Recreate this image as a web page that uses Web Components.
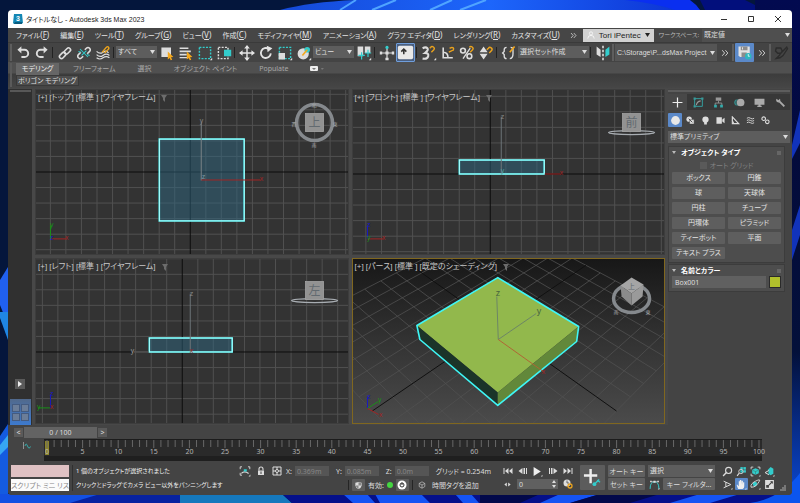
<!DOCTYPE html>
<html lang="ja">
<head>
<meta charset="utf-8">
<title>タイトルなし - Autodesk 3ds Max 2023</title>
<style>
  html, body { margin: 0; height: 100%; }
  body {
    font-family: "Noto Sans", "Noto Sans CJK JP", sans-serif;
    font-size: 7px;
    line-height: 1;
    color: #dcdcdc;
    background: #04123a;
    overflow: hidden;
  }
</style>
</head>
<body>
<max-desktop>
  <title-bar>タイトルなし - Autodesk 3ds Max 2023</title-bar>
  <menu-bar></menu-bar>
  <tool-bar></tool-bar>
  <ribbon-bar></ribbon-bar>
  <work-area>
    <view-port view="top">[+] [トップ] [標準 ] [ワイヤフレーム]</view-port>
    <view-port view="front">[+] [フロント] [標準 ] [ワイヤフレーム]</view-port>
    <view-port view="left">[+] [レフト] [標準 ] [ワイヤフレーム]</view-port>
    <view-port view="persp" active>[+] [パース] [標準 ] [既定のシェーディング]</view-port>
    <command-panel slot="panel"></command-panel>
  </work-area>
  <time-line></time-line>
  <status-bar></status-bar>
</max-desktop>

<script>
const BASE = `
  *, :host { box-sizing: border-box; }
  button, input, select { font: inherit; font-feature-settings: inherit; color: inherit; margin: 0; border: 0; padding: 0; border-radius: 0; min-width: 0; }
  button { background: none; white-space: nowrap; }
  :host { font-feature-settings: "palt"; white-space: nowrap; }
`

const CORNER = '<path d="M19 16v3h-3z" fill="#ddd"/>'

// every glyph is drawn in a 20 x 20 box
const ICONS = {
  undo: '<path d="M6 6h6a4 4 0 010 9H8" fill="none" stroke="#ddd" stroke-width="2.4"/><path d="M3 6l5-4.5v9z" fill="#ddd"/>',
  redo: '<path d="M14 6H8a4 4 0 000 9h4" fill="none" stroke="#ddd" stroke-width="2.4"/><path d="M17 6l-5-4.5v9z" fill="#ddd"/>',
  link: '<g fill="none" stroke="#ddd" stroke-width="2"><rect x="8.500" y="5" width="9" height="5" rx="2.500" transform="rotate(-45 13 7.500)"/><rect x="2.500" y="10.500" width="9" height="5" rx="2.500" transform="rotate(-45 7 13)"/></g>',
  unlink: '<g fill="none" stroke="#ddd" stroke-width="2"><path d="M11 6l2-2a2.600 2.600 0 014 4l-3 3M9 14l-2 2a2.600 2.600 0 01-4-4l3-3"/></g><path d="M5 5l10 10M13 7l-6 6M3 8l3 1M14 12l3 1" stroke="#3cc" stroke-width="1.300"/>',
  bind: '<g fill="none" stroke="#ddd" stroke-width="1.500"><path d="M2 8q4 4 8 1t7 1M2 12q4 4 8 1t8 0M2 16q4 3 8 0t8 0"/></g><path d="M9 9l5-6q2-2 3 0t-1 3l-4 4" fill="none" stroke="#e9a21d" stroke-width="1.800"/>',
  pick: '<path d="M3 3h12v12H3z" fill="#ddd"/><path d="M11 8l7 7-3 .3 1.500 3-1.800.8-1.400-3-2.300 2z" fill="#f5a81c"/>',
  pickName: '<path d="M2 3h11v2H2zM2 7h14v2H2zM2 11h9v2H2zM2 15h11v1.500H2z" fill="#ddd"/><path d="M11 8l7 7-3 .3 1.500 3-1.800.8-1.400-3-2.300 2z" fill="#f5a81c"/>',
  region: '<path d="M3 3h14v14H3z" fill="none" stroke="#3cc" stroke-width="1.800" stroke-dasharray="2.500 1.600"/>' + CORNER,
  crossing: '<path d="M3 3h12v14H3z" fill="none" stroke="#ddd" stroke-width="1.800" stroke-dasharray="2.500 1.600"/><path d="M10 6h9v8h-9z" fill="#3cc"/>',
  move: '<path d="M10 3v14M3 10h14" stroke="#e4e4e4" stroke-width="1.800"/><path d="M10 0l3.500 4.500h-7zM10 20l3.500-4.500h-7zM0 10l4.500-3.500v7zM20 10l-4.500-3.500v7z" fill="#e4e4e4"/>',
  rotate: '<path d="M13.500 5A6.200 6.200 0 1016 10.500" fill="none" stroke="#e4e4e4" stroke-width="2.300"/><path d="M11 1l7 3-6 5z" fill="#e4e4e4"/>',
  scale: '<path d="M3 3h14v14H3z" fill="none" stroke="#3cc" stroke-width="1.800" stroke-dasharray="2.500 1.600"/><path d="M2 10h8v8H2z" fill="#ddd"/>' + CORNER,
  place: '<circle cx="9" cy="11" r="7" fill="#ddd"/><circle cx="14" cy="6" r="3.500" fill="#3cc"/><path d="M8 13l6-7" stroke="#f5a81c" stroke-width="2"/>' + CORNER,
  pivot: '<path d="M2 2h7v12H2zM11 2h7v8h-7z" fill="#ddd"/><path d="M7 9v9M3 13h8M15 6v9M11 10h8" stroke="#3cc" stroke-width="1.500"/>' + CORNER,
  manip: '<path d="M10 3v14M3 10h14" stroke="#ddd" stroke-width="1.500"/><circle cx="10" cy="3" r="2" fill="#3cc"/><path d="M1 8v4h3V8zM16 8v4h3V8zM8 16h4v3H8zM8 8h4v4H8z" fill="#ddd"/>',
  keyboard: '<rect x="1" y="2" width="18" height="16" rx="2" fill="#e8e8e8"/><path d="M8 12V7M5 9l3-3 3 3" fill="none" stroke="#333" stroke-width="1.800"/>',
  angleSnap: '<path d="M4 3v13h12M4 9q6 0 6 7" fill="none" stroke="#ddd" stroke-width="2"/><path d="M11 9l4-2a2 2 0 000-4l-3 1" fill="none" stroke="#e9a21d" stroke-width="1.800"/>',
  snap: '<path d="M2 4q4-2 6 0t-3 6q5 0 4 4t-7 3" fill="none" stroke="#ddd" stroke-width="2.600"/><path d="M13 9l3-3a2 2 0 00-4-3l-1 1" fill="none" stroke="#e9a21d" stroke-width="1.800"/>' + CORNER,
  percent: '<circle cx="5" cy="7" r="3" fill="none" stroke="#ddd" stroke-width="2"/><circle cx="13" cy="14" r="3" fill="none" stroke="#ddd" stroke-width="2"/><path d="M5 17l9-13" stroke="#ddd" stroke-width="1.700"/><path d="M14 9l3-3a2 2 0 00-4-3" fill="none" stroke="#e9a21d" stroke-width="1.800"/>',
  spinner: '<path d="M7 2l5 7H2zM7 18l5-7H2z" fill="#ddd"/><path d="M14 10l3-3a2 2 0 00-4-3l-2 2" fill="none" stroke="#e9a21d" stroke-width="1.800"/>',
  braces: '<path d="M7 3q-3 0-3 3v2l-2 2 2 2v2q0 3 3 3M12 3q3 0 3 3v5q0 6-4 6" fill="none" stroke="#ddd" stroke-width="1.700"/><path d="M11 9l6-7" stroke="#f5a81c" stroke-width="2"/>',
  mirror: '<path d="M2 2l5 4v9l-5-3zM9 1h2v3H9zM9 6h2v3H9zM9 11h2v3H9zM9 16h2v3H9z" fill="#ddd"/><path d="M18 2l-5 4v9l5-3z" fill="#3cc"/>',
  save: '<path d="M2 2h15v14H4l-2-2z" fill="#e2e2e2"/><path d="M5 2h9v5H5zM6 10h7v6H6z" fill="#8c8c8c"/><path d="M7 3h1v3H7z" fill="#fff"/><circle cx="15" cy="15" r="4.300" fill="#2fb7bd"/><path d="M15 12v3h2" fill="none" stroke="#fff"/>',
  brush: '<path d="M3 4h6l2 4-2 3H5L2 8zM9 11l8-8 1 2-6 9-4 3-5 1 4-4z" fill="none" stroke="#2c2c2c" stroke-width="1.800"/>',
  more: '<path d="M3 3l6 7-6 7M11 3l6 7-6 7" fill="none" stroke="#ddd" stroke-width="2.200"/>',
  person: '<circle cx="10" cy="6" r="4" fill="none" stroke="#fff" stroke-width="1.800"/><path d="M2 19q0-8 8-8t8 8" fill="none" stroke="#fff" stroke-width="1.800"/>',
  plus: '<path d="M10 1v18M1 10h18" stroke="#eee" stroke-width="2.200"/>',
  modify: '<path d="M3 3h14v14H3z" fill="none" stroke="#3aa" stroke-width="1.600"/><path d="M6 15q1-7 8-8" fill="none" stroke="#999" stroke-width="2"/><path d="M1 1h4v4H1zM15 1h4v4h-4zM1 15h4v4H1z" fill="#3a9a9a"/>',
  hierarchy: '<path d="M5 1h10v6H5z" fill="#999"/><path d="M10 7v4M4 15v-4h12v4" fill="none" stroke="#999" stroke-width="1.500"/><path d="M2 14h5v5H2zM13 14h5v5h-5z" fill="#3aa"/>',
  motion: '<circle cx="12" cy="10" r="7" fill="#aaa"/><path d="M6 4a8 8 0 000 12M3 5a8 8 0 000 10" fill="none" stroke="#3aa" stroke-width="1.400"/>',
  display: '<path d="M1 3h18v11H1zM8 14h4v3H8zM6 16h8v2H6z" fill="#aaa"/>',
  wrench: '<path d="M8 8l9 9" stroke="#aaa" stroke-width="3.500"/><path d="M3 3l3 3 3-3q2 5-2 7-5 0-5-5z" fill="#aaa"/>',
  sphere: '<circle cx="10" cy="10" r="8" fill="#e8e8e8"/>',
  shapes: '<circle cx="7" cy="7" r="6" fill="#ddd"/><path d="M8 8h10v10H8z" fill="#ddd" stroke="#444"/><path d="M6 6l8 8" stroke="#444" stroke-width="2"/>',
  light: '<circle cx="10" cy="8" r="7" fill="#ddd"/><path d="M7 12h6v7H7z" fill="#ddd"/>',
  camera: '<path d="M1 3h12v14H1zM14 8l5-4v12l-5-4z" fill="#ddd"/>',
  helper: '<path d="M3 2l14 15H3z" fill="none" stroke="#ddd" stroke-width="2.600"/><path d="M3 10l4 7" stroke="#ddd" stroke-width="2"/>',
  waves: '<path d="M2 5q4-3 8 0t8 0M2 10q4-3 8 0t8 0M2 15q4-3 8 0t8 0" fill="none" stroke="#ddd" stroke-width="2"/>',
  system: '<circle cx="6" cy="6" r="4" fill="none" stroke="#ddd" stroke-width="2.400"/><circle cx="14" cy="13" r="4" fill="none" stroke="#ddd" stroke-width="2.400"/>',
  isolate: '<path d="M2 7V3h3M15 3h3v4M2 13v4h3" fill="none" stroke="#ddd" stroke-width="1.500"/><path d="M4 14q5-5 12 0" fill="none" stroke="#ddd" stroke-width="2"/><path d="M8 7h5v4H8z" fill="#3cc"/>' + CORNER,
  lock: '<path d="M4 9h12v9H4z" fill="#ddd"/><path d="M6 9V6a4 4 0 018 0v3" fill="none" stroke="#ddd" stroke-width="2.200"/><path d="M10 11v5" stroke="#444" stroke-width="2"/>',
  absolute: '<path d="M2 2h16v16H2z" fill="none" stroke="#ddd" stroke-width="2"/><circle cx="10" cy="10" r="3" fill="none" stroke="#ddd" stroke-width="2"/><path d="M10 2v5M10 13v5M2 10h5M13 10h5" stroke="#ddd" stroke-width="2"/>',
  shield: '<path d="M3 4l7-2 7 2v6q-1 6-7 8-6-2-7-8z" fill="#ddd"/><path d="M10 3v7H4q0 4 6 8v-8h6V4z" fill="#888"/>',
  toggle: '<circle cx="10" cy="10" r="9" fill="#fff"/><circle cx="10" cy="10" r="4" fill="none" stroke="#333" stroke-width="2"/><path d="M10 5v5" stroke="#333" stroke-width="2"/>',
  tag: '<path d="M10 2l7 4v8l-7 4-7-4V6zM3 6l7 4 7-4M10 10v8" fill="none" stroke="#ccc" stroke-width="1.600"/>',
  first: '<path d="M1 4h2v12H1zM11 4v12l-7-6zM19 4v12l-7-6z" fill="#ddd"/>',
  prev: '<path d="M9 4v12l-8-6zM11 4h3v12h-3zM16 4h2v12h-2z" fill="#ddd"/>',
  play: '<path d="M3 2l13 8-13 8z" fill="#eee"/>' + CORNER,
  next: '<path d="M11 4v12l8-6zM2 4h2v12H2zM6 4h3v12H6z" fill="#ddd"/>',
  last: '<path d="M17 4h2v12h-2zM1 4v12l7-6zM9 4v12l7-6z" fill="#ddd"/>',
  keyMode: '<path d="M8 4v12l-7-6zM12 4v12l7-6z" fill="#ddd"/>',
  timeConfig: '<circle cx="8" cy="8" r="7" fill="#ddd"/><path d="M8 3v5h4" fill="none" stroke="#444" stroke-width="1.500"/><circle cx="14" cy="14" r="4" fill="none" stroke="#e9a21d" stroke-width="2.600"/>',
  bigKey: '<path d="M8 1v15M1 8h14" stroke="#eee" stroke-width="2.600"/><path d="M12 17l5-5" stroke="#3cc" stroke-width="1.500"/><circle cx="12" cy="17" r="2" fill="#3cc"/><path d="M15 13l3 2" stroke="#3cc" stroke-width="1.300"/>',
  tangent: '<path d="M2 18q0-13 8-13t8 13" fill="none" stroke="#3cc" stroke-width="1.800"/><path d="M4 5h12" stroke="#ddd"/><path d="M8 3h4v4H8zM2 3h3v3H2zM15 3h3v3h-3z" fill="#ddd"/>' + CORNER,
  zoom: '<circle cx="12" cy="8" r="5.500" fill="none" stroke="#ddd" stroke-width="2"/><path d="M8 12l-6 6" stroke="#ddd" stroke-width="2.500"/>',
  zoomAll: '<path d="M8 2h10v10H8z" fill="#3cc"/><path d="M13 2v10M8 7h10" stroke="#444"/><circle cx="9" cy="10" r="4" fill="none" stroke="#ddd" stroke-width="1.500"/><path d="M6 13l-4 5" stroke="#ddd" stroke-width="2"/>',
  extents: '<path d="M2 6V2h4M14 2h4v4M2 14v4h4" fill="none" stroke="#ddd" stroke-width="1.600"/><path d="M10 4l6 3v6l-6 3-6-3V7z" fill="#3cc"/><path d="M5 8l5 2 5-2M10 10v5" fill="none" stroke="#376"/>' + CORNER,
  extentsAll: '<path d="M12 2l5 3v9l-5 3-4-3V6z" fill="#3cc"/><path d="M9 8l-7 4 7 4" fill="none" stroke="#ddd" stroke-width="1.800"/>' + CORNER,
  fov: '<path d="M3 4l13 6-13 6M7 6v8" fill="none" stroke="#ddd" stroke-width="1.800"/>' + CORNER,
  hand: '<path d="M4 18q-4-8-2-8l3 3V4h2v6-8h2.500v8l.5-7h2.500v8l.5-5h2v7q0 4-3 5z" fill="#eee"/>' + CORNER,
  orbit: '<circle cx="9" cy="9" r="4" fill="#3cc"/><path d="M2 15q-2-6 8-11t7 0-6 8-9 3" fill="none" stroke="#ddd" stroke-width="1.700"/>' + CORNER,
  maximize: '<path d="M2 2h16v16H2z" fill="#ddd"/><path d="M11 4h5v5zM4 11h5v5H4z" fill="#444"/><path d="M9 11l6-6" stroke="#444" stroke-width="2"/>',
  curve: '<path d="M3 2v14" stroke="#aaa" stroke-width="1.500"/><path d="M6 10q2-8 5 0t6 1" fill="none" stroke="#3cc" stroke-width="1.500"/>'
}

const icon = (name, size) => `<svg viewBox="0 0 20 20" width="${size}" height="${size}" aria-hidden="true">${ICONS[name]}</svg>`

const define = (tag, render) => {
  customElements.define(tag, class extends HTMLElement {
    constructor () {
      super()
      this.attachShadow({ mode: 'open' })
    }

    connectedCallback () {
      this.shadowRoot.innerHTML = `<style>${BASE}</style>` + render(this)
    }
  })
}

define('icon-button', el => `
  <style>
    :host { display: block; flex: none; width: 19px; height: 19px; }
    button { width: 100%; height: 100%; display: grid; place-items: center; border-radius: 1px; }
    :host([on]) button { background: #5b89c9; }
    :host([on][ring]) button { background: #4a5f80; border: 1px solid #6f9edc; }
    :host([flat]) button { background: #5c5c5c; }
    svg { display: block; }
  </style>
  <button type="button" aria-label="${el.getAttribute('label') || el.getAttribute('icon')}">${icon(el.getAttribute('icon'), el.getAttribute('size') || 14)}</button>
`)

define('drop-down', el => `
  <style>
    :host { display: grid; height: 12px; background: #5d5d5d; color: #ddd; align-items: center; }
    select, svg { grid-area: 1 / 1; }
    select { appearance: none; background: none; width: 100%; height: 100%; padding: 0 8px 0 2px; line-height: 10px; outline: none; }
    svg { justify-self: end; margin-right: 2px; pointer-events: none; }
  </style>
  <select aria-label="${el.getAttribute('label')}"><option>${el.getAttribute('value')}</option></select>
  <svg width="5" height="4" viewBox="0 0 5 4"><path d="M0 0h5L2.500 4z" fill="#ddd"/></svg>
`)

define('max-desktop', () => `
  <style>
    :host { display: grid; height: 100vh; }
    .wall, main { grid-area: 1 / 1; min-width: 0; min-height: 0; }
    .wall { width: 100%; height: 100vh; display: block; }
    main { margin: 10px 8px 8px; display: flex; flex-direction: column; background: #444; border-radius: 4px; overflow: hidden; position: relative; }
  </style>
  <svg class="wall" viewBox="0 0 800 503" preserveAspectRatio="none" aria-hidden="true">
    <defs>
      <linearGradient id="a"><stop offset="0" stop-color="#1449d8"/><stop offset=".5" stop-color="#1d66fb"/><stop offset="1" stop-color="#0b2fd0"/></linearGradient>
      <linearGradient id="b" x2="0" y2="1"><stop offset="0" stop-color="#020a50"/><stop offset=".3" stop-color="#030b3c"/><stop offset=".7" stop-color="#03103a"/><stop offset="1" stop-color="#0b49d6"/></linearGradient>
    </defs>
    <path d="M0 0h800v503H0z" fill="#04163c"/>
    <path d="M280 10Q310 2 355 0H660L700 10z" fill="url(#a)"/>
    <path d="M340 10L356 0M372 10L396 0M430 10L452 0M460 10L486 0" stroke="#4fa4ff" stroke-width="2"/>
    <path d="M625 0q30 3 50 10h25q-4-6-10-10z" fill="#0a2ff0"/>
    <path d="M700 0h45l20 10h-60z" fill="#020f7c"/>
    <path d="M755 0h45v503h-45z" fill="url(#b)"/>
    <path d="M800 110L792 145v14l8-16zM800 205l-8 25v30l8-25z" fill="#1133bb"/>
    <path d="M0 280l8-13v58l-8-20z" fill="#2060f0"/>
    <path d="M0 312h8v28l-8-22z" fill="#1f86e4"/>
    <path d="M0 436l8-12v79H0z" fill="#145be0"/>
    <path d="M0 455l8-8v-12l-8 10z" fill="#36a6f4"/>
    <path d="M0 494h180v9H0z" fill="#1350e2"/>
    <path d="M100 494h90v9H70z" fill="#0722a0"/>
    <path d="M180 494h102l10 9H180z" fill="#1578bd"/>
    <path d="M282 494h510v9H292z" fill="#05108a"/>
    <path d="M343 494h24l8 9h-22zM375 494h46l9 9h-50zM455 494h16l8 9h-16zM560 494h40l-30 9h-30zM700 494h40l-30 9h-40z" fill="#1554f4"/>
    <path d="M480 494h60l-20 9h-40zM600 494h60l-30 9h-60z" fill="#02094a"/>
    <path d="M750 503q30-4 50-30v30z" fill="#0b55ee"/>
  </svg>
  <main><slot></slot></main>
`)

define('title-bar', () => `
  <style>
    :host { display: flex; flex: none; align-items: center; height: 18px; padding: 0 9px 0 5px; background: #fff; color: #222; }
    h1 { flex: 1; margin: 0 0 0 3px; font-size: 7px; font-weight: 400; font-family: "Liberation Sans", "Noto Sans CJK JP", sans-serif; }
    .logo { display: block; }
    .buttons { display: flex; gap: 17px; }
    button { width: 10px; height: 10px; display: block; }
    button svg { display: block; }
    text { font: bold 7px "Liberation Sans", sans-serif; }
  </style>
  <svg class="logo" width="10" height="10" viewBox="0 0 10 10"><path d="M1 0h8l1 9-2 1H1L0 9z" fill="#1487b4"/><path d="M2 8h7v2H1z" fill="#0a5d80"/><text x="3" y="7" fill="#fff">3</text></svg>
  <h1><slot></slot></h1>
  <div class="buttons">
    <button aria-label="最小化"><svg width="10" height="10"><path d="M2 5.500h6" stroke="#333"/></svg></button>
    <button aria-label="最大化"><svg width="10" height="10"><path d="M2.500 2.500h5v5h-5z" fill="none" stroke="#333"/></svg></button>
    <button aria-label="閉じる"><svg width="10" height="10"><path d="M2 2l6 6M8 2l-6 6" stroke="#333"/></svg></button>
  </div>
`)

const MENUS = [['ファイル', 'F'], ['編集', 'E'], ['ツール', 'T'], ['グループ', 'G'], ['ビュー', 'V'], ['作成', 'C'], ['モディファイヤ', 'M'],
  ['アニメーション', 'A'], ['グラフ エディタ', 'D'], ['レンダリング', 'R'], ['カスタマイズ', 'U']]

define('menu-bar', () => `
  <style>
    :host { display: flex; flex: none; height: 14px; align-items: center; background: #464646; color: #e4e4e4; }
    nav { flex: 1; display: flex; justify-content: space-between; margin: 0 4px 0 8px; }
    nav button { line-height: 10px; }
    nav span { font-size: 8px; }
    .user { display: flex; align-items: center; width: 71px; height: 13px; background: #d2d2d2; color: #222; font: 8px "Liberation Sans", sans-serif; padding: 0 4px; gap: 4px; }
    .user b { flex: 1; font-weight: 400; text-align: left; }
    .user svg { display: block; }
    label { color: #bbb; margin: 0 3px 0 5px; font-size: 6px; }
    drop-down { width: 90px; height: 13px; background: #4f4f4f; }
  </style>
  <nav>${MENUS.map(([name, key]) => `<button>${name}<span>(<u>${key}</u>)</span></button>`).join('')}</nav>
  <icon-button icon="more" size="7" label="その他"></icon-button>
  <button class="user">${icon('person', 8)}<b>Tori iPentec</b><svg width="5" height="4"><path d="M0 0h5L2.500 4z" fill="#222"/></svg></button>
  <label>ワークスペース:</label>
  <drop-down label="ワークスペース" value="既定値"></drop-down>
`)

const tools = names => names.split(' ').map(n => `<icon-button icon="${n}" size="16"></icon-button>`).join('')

define('tool-bar', () => `
  <style>
    :host { display: flex; flex: none; height: 20px; align-items: center; background: #444; padding-left: 2px; border-top: 1px solid #3a3a3a; }
    i { flex: none; width: 1px; height: 11px; margin: 0 2px 0 1px; background: #222; }
    i.grip { width: 2px; height: 17px; margin: 0 1px 0 0; background: #5e5e5e; }
    drop-down { flex: none; width: 41px; margin-bottom: 2px; }
    drop-down.set { width: 71px; }
    drop-down.path { width: 102px; height: 17px; margin: 0; font-size: 7px; font-family: "Liberation Sans", sans-serif; background: #555; }
    .more { width: 15px; }
  </style>
  <i class="grip"></i>
  ${tools('undo redo')}<i></i>${tools('link unlink bind')}<i></i>
  <drop-down label="選択フィルタ" value="すべて"></drop-down>
  ${tools('pick pickName region crossing')}<i></i>${tools('move rotate scale place')}
  <drop-down label="参照座標系" value="ビュー"></drop-down>
  ${tools('pivot')}<i></i>${tools('manip')}
  <icon-button on ring icon="keyboard" size="17"></icon-button><i></i>
  ${tools('snap angleSnap percent spinner')}<i></i>${tools('braces')}
  <drop-down class="set" label="名前付き選択セット" value="選択セット作成"></drop-down><i></i>
  ${tools('mirror')}<i class="grip"></i>
  <drop-down class="path" label="プロジェクト" value="C:\\Storage\\P...dsMax Project"></drop-down>
  <icon-button class="more" icon="more" size="8" label="その他"></icon-button><i class="grip"></i>
  <icon-button on icon="save" size="15"></icon-button>
  <icon-button class="more" icon="more" size="8" label="その他"></icon-button><i class="grip"></i>
  <icon-button icon="brush" size="15"></icon-button>
`)

define('ribbon-bar', () => `
  <style>
    :host { display: flex; flex: none; background: linear-gradient(#505050 0 11px, #3c3c3c 12px, #464646); padding-left: 2px; gap: 4px; color: #a8a8a8; }
    .grip { width: 2px; margin: 1px 0; background: #5a5a5a; }
    .rows { flex: 1; }
    .tabs { display: flex; align-items: center; height: 13px; }
    .tabs button { height: 12px; margin-right: 22px; }
    .tabs button.on { width: 43px; margin-right: 14px; background: #666; color: #eee; }
    .panel { height: 13px; }
    .panel button { height: 11px; background: #4e4e4e; padding: 0 1px; color: #ddd; border: 1px solid #393939; line-height: 9px; }
    .mini { display: block; }
  </style>
  <div class="grip"></div>
  <div class="rows">
    <div class="tabs">
      <button class="on">モデリング</button><button>フリーフォーム</button><button>選択</button><button>オブジェクト ペイント</button><button>Populate</button>
      <svg class="mini" width="15" height="6"><rect width="8" height="5" rx="1" fill="#eee"/><path d="M2 2h4L4 4zM11 2h3l-2 2z" fill="#777"/></svg>
    </div>
    <div class="panel"><button>ポリゴン モデリング</button></div>
  </div>
`)

define('work-area', () => `
  <style>
    :host { display: grid; grid-template-columns: 24px minmax(0, 1fr) 124px; flex: 1; min-height: 0; column-gap: 3px; background: #484848; padding-top: 1px; }
    aside { display: flex; flex-direction: column; align-items: center; justify-content: flex-end; background: #303030; gap: 10px; }
    .handle { width: 21px; height: 2px; background: #585858; margin: 1px 0 auto; }
    .open { width: 10px; height: 10px; background: #5a5a5a; display: grid; place-items: center; }
    .layout { width: 21px; height: 26px; display: grid; grid-template-columns: 8px 8px; grid-auto-rows: 8px; gap: 1px; place-content: center; background: linear-gradient(#51698c, #3d7ace); }
    .layout i { background: #6b7d98; border: 1px solid #445b80; }
    .views { display: grid; grid-template: minmax(0, 1fr) minmax(0, 1fr) / minmax(0, 1fr) minmax(0, 1fr); gap: 3px; min-height: 0; padding-bottom: 1px; }
  </style>
  <aside>
    <div class="handle"></div>
    <button class="open" aria-label="レイアウトを開く"><svg width="4" height="6"><path d="M0 0l4 3-4 3z" fill="#eee"/></svg></button>
    <button class="layout" aria-label="4 分割"><i></i><i></i><i></i><i></i></button>
  </aside>
  <div class="views"><slot></slot></div>
  <slot name="panel"></slot>
`)

const STEP = 15.57

// square grid through the view's own origin
const flatGrid = (ox, oy) => {
  let d = ''
  for (let i = -12; i <= 12; i++) {
    if (i === 0) continue
    d += `M${(ox + i * STEP).toFixed(1)} 0v166M0 ${(oy + i * STEP).toFixed(1)}h314`
  }
  return `<path d="${d}" stroke="#505050" fill="none"/><path d="M${ox} 0v166M0 ${oy}h314" stroke="#0c0c0c"/>`
}

const project = (x, y) => {
  const w = 1 - 0.0236 * x + 0.0236 * y
  return `${((144 + 10.9 * x + 18.27 * y) / w).toFixed(1)} ${((67.6 + 8.54 * x - 8.54 * y) / w).toFixed(1)}`
}

const perspectiveGrid = () => {
  let d = ''
  for (let i = -7; i <= 7; i++) {
    if (i === 0) continue
    d += `M${project(i, -7)}L${project(i, 7)}M${project(-7, i)}L${project(7, i)}`
  }
  return `<path d="${d}" stroke="#505050" stroke-width=".8" fill="none"/>
    <path d="M${project(0, -7)}L${project(0, 7)}M${project(-7, 0)}L${project(7, 0)}" stroke="#101010" fill="none"/>`
}

const box = (x, y, w, h) => `<rect x="${x}" y="${y}" width="${w}" height="${h}" fill="#2d6680" fill-opacity=".5" stroke="#4ff4f4" stroke-width="1.600"/>
  <rect x="${x}" y="${y}" width="${w}" height="${h}" fill="none" stroke="#d8ffff" stroke-width=".6"/>`

const tripod = (hx, hname, hcol, vname, vcol, oname, ocol) => `
  <path d="M14.500 149.500H${hx}" stroke="${hcol}"/><path d="M14.500 149.500V136" stroke="${vcol}"/>
  <text x="${hx - 1}" y="151" fill="${hcol}">${hname}</text>
  <text x="14" y="138" fill="${vcol}">${vname}</text><text x="14" y="151" fill="${ocol}">${oname}</text>`

const face = (y, name) => `<rect x="270" y="${y}" width="18" height="18" fill="#929292" stroke="#a4a4a4" stroke-width=".8"/><text class="face" x="279" y="${y + 13}">${name}</text>`

const sideCube = (y, name) => `<ellipse cx="279" cy="${y + 19}" rx="23" ry="2" fill="none" stroke="#a8adb2" stroke-width="1.300"/>${face(y, name)}`

const RED = '#a32323'
const GREEN = '#189018'
const BLUE = '#1a1ac0'

const SCENES = {
  top: () => flatGrid(154.5, 82.5) + box(123.500, 49.500, 85, 82) +
    `<path d="M165.500 91V33" stroke="#7a8488"/><path d="M165.500 90.500H225" stroke="${RED}"/>
    <text x="164" y="33" fill="#888">y</text><text x="166" y="90" fill="#7d98a2">z</text><text x="224" y="92" fill="${RED}">x</text>
    ${tripod(30, 'x', RED, 'y', GREEN, 'z', BLUE)}
    <circle cx="279" cy="33" r="18" fill="none" stroke="#85898d" stroke-width="3.500"/>
    <g class="compass"><text x="276" y="17">北</text><text x="276" y="57">南</text><text x="256" y="36">西</text><text x="297" y="36">東</text></g>${face(24, '上')}`,
  front: () => flatGrid(137.5, 84.5) + box(106.500, 70.500, 85, 14) +
    `<path d="M148.500 84V27" stroke="#6c7478"/><path d="M192 84.500H208" stroke="${RED}"/>
    <text x="148" y="29" fill="#888">z</text><text x="148" y="84" fill="#55a0a0">y</text><text x="207" y="86" fill="${RED}">x</text>
    ${tripod(30, 'x', RED, 'z', BLUE, 'y', GREEN)}${sideCube(24, '前')}`,
  left: () => flatGrid(146.5, 93.5) + box(113.500, 79.500, 83, 14) +
    `<path d="M154.500 93V35" stroke="#6c7478"/><path d="M113 93.500H98" stroke="#777"/>
    <text x="154" y="37" fill="#888">z</text><text x="95" y="95" fill="#999">y</text><text x="154" y="95" fill="${RED}">x</text>
    ${tripod(2, 'y', GREEN, 'z', BLUE, 'x', RED)}${sideCube(23, '左')}`,
  persp: () => `
    <defs><linearGradient id="g" x2="0" y2="1"><stop offset="0" stop-color="#171717"/><stop offset=".5" stop-color="#333"/><stop offset="1" stop-color="#4b4b4b"/></linearGradient></defs>
    <path d="M0 0h314v166H0z" fill="url(#g)"/>${perspectiveGrid()}
    <path d="M145 19L64 67l81 67 81-66z" fill="#92b84c"/>
    <path d="M64 67l3 14 78 66v-13z" fill="#1b3429"/>
    <path d="M145 134v13l79-64 2-15z" fill="#62883a"/>
    <path d="M145 19L64 67l3 14 78 66 79-64 2-15z" fill="none" stroke="#3ff6f6" stroke-width="1.600" stroke-linejoin="round"/>
    <path d="M145.500 81L144 38M145.500 81l38-26" stroke="#6c8665" fill="none"/><path d="M145.500 81l45 32" stroke="#b06535"/>
    <g class="axis"><text x="143" y="37">z</text><text x="184" y="55">y</text></g><text x="189" y="116" fill="${RED}">x</text>
    <path d="M14.500 150v-12" stroke="${BLUE}"/><path d="M14.500 150l11-7" stroke="${GREEN}"/><path d="M14.500 150l11 6" stroke="${RED}"/>
    <text x="14" y="141" fill="${BLUE}">z</text><text x="25" y="144" fill="${GREEN}">y</text><text x="26" y="159" fill="${RED}">x</text>
    <ellipse cx="279" cy="40" rx="18" ry="14" fill="none" stroke="#85898d" stroke-width="3.500"/>
    <path d="M279 19l12 7-12 9-11-8z" fill="#a5a5a5"/><path d="M268 27l11 8v12l-10-9z" fill="#8b8b8b"/><path d="M291 26l-12 9v12l11-9z" fill="#9a9a9a"/>
    <text class="face tiny" x="279" y="30">上</text><g class="compass"><text x="261" y="55">南</text><text x="293" y="55">東</text></g>`
}

define('view-port', el => `
  <style>
    :host { display: grid; grid-template: minmax(0, 1fr) / minmax(0, 1fr); min-width: 0; min-height: 0; overflow: hidden; border: 1px solid #3d3d3d; background: #333; }
    :host([active]) { border-color: #80671f; }
    .scene, .label { grid-area: 1 / 1; min-height: 0; }
    .scene { display: block; width: 100%; height: 100%; font: 7px "Liberation Sans", "Noto Sans CJK JP", sans-serif; }
    .face { font-size: 12px; text-anchor: middle; fill: #626a70; }
    .tiny { font-size: 7px; }
    .compass { font-size: 5px; fill: #a5a8ab; }
    .axis { font-size: 9px; fill: #45643e; }
    .label { display: flex; align-self: start; align-items: center; gap: 6px; padding: 3px 2px; font-size: 8px; line-height: 10px; font-family: "Liberation Sans", "Noto Sans CJK JP", sans-serif; color: #c8c8c8; }
    .label svg { display: block; }
  </style>
  <svg class="scene" viewBox="0 0 312 165" preserveAspectRatio="xMidYMid slice">${SCENES[el.getAttribute('view')]()}</svg>
  <div class="label"><span><slot></slot></span><svg width="6" height="7"><path d="M0 0h6L4 3v4L2 5V3z" fill="#6c6c6c"/></svg></div>
`)

define('roll-out', el => `
  <style>
    :host { display: block; margin-right: 5px; padding: 0 3px 3px; background: #4d4d4d; border: 1px solid #3c3c3c; }
    h2 { display: flex; align-items: center; gap: 5px; height: 11px; margin: 0; font-size: 7px; color: #fff; }
    h2 span { flex: 1; }
    i { width: 4px; height: 4px; background: #666; }
  </style>
  <h2><svg width="4" height="3"><path d="M0 0h4L2 3z" fill="#bbb"/></svg><span>${el.getAttribute('heading')}</span><i></i></h2>
  <slot></slot>
`)

const OBJECTS = ['ボックス', '円錐', '球', '天球体', '円柱', 'チューブ', '円環体', 'ピラミッド', 'ティーポット', '平面', 'テキスト プラス']

define('command-panel', () => `
  <style>
    :host { display: flex; flex-direction: column; min-width: 0; padding-right: 2px; background: #444; }
    .handle { flex: none; height: 2px; margin: 1px 0 2px; background: #5d5d5d; }
    .tabs { display: flex; justify-content: space-between; background: #383838; }
    .tabs icon-button { height: 16px; }
    .tabs icon-button:first-child { background: #484848; }
    .kinds { display: flex; gap: 1px; margin: 3px 0 4px; }
    .kinds icon-button { width: 14px; height: 14px; }
    drop-down { height: 12px; margin-bottom: 3px; }
    .auto { display: flex; align-items: center; justify-content: center; gap: 3px; height: 14px; color: #828282; }
    .auto input { appearance: none; width: 7px; height: 7px; background: #5a5a5a; }
    .grid { display: grid; grid-template-columns: 1fr 1fr; gap: 3px; }
    .grid button { height: 12px; background: #5e5e5e; border-radius: 1px; color: #e4e4e4; line-height: 10px; }
    roll-out + roll-out { margin-top: 1px; }
    .name { display: flex; gap: 3px; }
    .name input { flex: 1; height: 12px; padding: 0 3px; background: #606060; }
    .name button { width: 12px; height: 12px; background: #b1c02c; border: 1px solid #2a2a2a; }
  </style>
  <div class="handle"></div>
  <div class="tabs">${['plus', 'modify', 'hierarchy', 'motion', 'display', 'wrench'].map(n => `<icon-button icon="${n}" size="11"></icon-button>`).join('')}</div>
  <div class="kinds">${['sphere', 'shapes', 'light', 'camera', 'helper', 'waves', 'system'].map((n, i) => `<icon-button ${i ? '' : 'on'} icon="${n}" size="${i ? 9 : 11}"></icon-button>`).join('')}</div>
  <drop-down label="カテゴリ" value="標準プリミティブ"></drop-down>
  <roll-out heading="オブジェクト タイプ">
    <label class="auto"><input type="checkbox" disabled>オート グリッド</label>
    <div class="grid">${OBJECTS.map(n => `<button>${n}</button>`).join('')}</div>
  </roll-out>
  <roll-out heading="名前とカラー">
    <div class="name"><input aria-label="名前" value="Box001"><button aria-label="カラー"></button></div>
  </roll-out>
`)

const ruler = () => {
  let out = ''
  for (let i = 0; i <= 100; i++) {
    out += `<line x1="${i}%" x2="${i}%" y1="0" y2="${i % 5 ? 7 : 8}" stroke="#686868"/>`
    if (i % 5 === 0) out += `<text x="${i}%" y="14">${i}</text>`
  }
  return out
}

define('time-line', () => `
  <style>
    :host { display: grid; grid-template-columns: 34px minmax(0, 1fr); flex: none; background: #444; padding: 1px 30px 0 2px; }
    .slider { grid-column: 1 / -1; display: flex; align-items: center; height: 13px; padding-left: 4px; gap: 1px; }
    .slider button { width: 9px; height: 9px; background: #5a5a5a; line-height: 8px; }
    .slider .thumb { width: 73px; height: 11px; background: #636363; }
    .curve { display: grid; place-items: center; padding-bottom: 8px; }
    .track { height: 22px; background: linear-gradient(#2a2a2a 16px, #1f1f1f 16px); border-top: 1px solid #1c1c1c; padding: 0 3px; }
    .track svg { display: block; width: 100%; height: 21px; overflow: visible; }
    text { font-size: 7px; fill: #b4b4b4; text-anchor: middle; }
  </style>
  <div class="slider"><button aria-label="前へ">&lt;</button><button class="thumb">0 / 100</button><button aria-label="次へ">&gt;</button></div>
  <div class="curve">${icon('curve', 10)}</div>
  <div class="track"><svg><rect x="-2" y="1" width="4" height="14" fill="#8c842a"/>${ruler()}</svg></div>
`)

define('status-bar', () => `
  <style>
    :host { display: flex; flex: none; height: 34px; padding: 4px 6px 4px 3px; background: #444; }
    .mini { display: flex; flex-direction: column; gap: 2px; width: 59px; padding-right: 1px; }
    .mini input { width: 100%; flex: 1; background: #fbfbfb; color: #888; font-size: 7px; padding: 0; }
    .mini .macro { background: #dfc1c3; }
    .message { flex: 1; min-width: 0; display: flex; flex-direction: column; justify-content: space-between; padding: 1px 0 1px 3px; color: #f0f0f0; border-left: 1px solid #303030; font-size: 6px; line-height: 10px; margin-left: 2px; }
    .coords { display: flex; flex-direction: column; justify-content: space-between; width: 262px; }
    .row { display: flex; align-items: center; height: 12px; gap: 3px; }
    .coords icon-button { width: 13px; height: 12px; }
    label { display: flex; align-items: center; gap: 3px; margin-right: 4px; }
    label input { width: 34px; height: 10px; padding: 0 2px; background: #555; color: #858585; }
    i { width: 1px; height: 10px; background: #252525; }
    .low { padding-left: 110px; }
    .dot { width: 6px; height: 6px; border-radius: 50%; background: #45d540; }
    .play { display: grid; grid-template-columns: repeat(5, 15px); grid-template-rows: 12px 12px; align-items: center; width: 75px; row-gap: 1px; }
    .play icon-button { width: 15px; height: 12px; }
    .spin { grid-column: 2 / 5; display: flex; align-items: center; height: 10px; background: #606060; padding-right: 2px; margin: 0 2px; }
    .spin input { flex: 1; width: 20px; background: none; padding: 0 2px; }
    .bigkey { width: 25px; height: 25px; margin: 0 3px 0 5px; }
    .keys { display: grid; grid-template-columns: 37px 12px 52px; grid-template-rows: 12px 12px; gap: 1px 3px; }
    .keys button { background: #606060; border-radius: 1px; }
    .keys drop-down { grid-column: 2 / 4; }
    .keys icon-button { width: 12px; height: 12px; }
    .nav { display: grid; grid-template-columns: repeat(4, 13px); grid-template-rows: 12px 12px; gap: 1px; margin: 0 0 0 6px; }
    .nav icon-button { width: 13px; height: 12px; }
    .resize { align-self: flex-end; margin-left: 4px; }
  </style>
  <div class="mini"><input class="macro" aria-label="マクロ レコーダ"><input aria-label="リスナー" value="スクリプト ミニ リス"></div>
  <div class="message"><span>1 個のオブジェクトが選択されました</span><span>クリックとドラッグでカメラ ビュー以外をパンニングします</span></div>
  <div class="coords">
    <div class="row">
      <icon-button icon="isolate" size="12"></icon-button><icon-button icon="lock" size="10"></icon-button><icon-button icon="absolute" size="10"></icon-button>
      <label>X: <input value="0.369m"></label><label>Y: <input value="0.085m"></label><label>Z: <input value="0.0m"></label>
      <span>グリッド = 0.254m</span>
    </div>
    <div class="row low">
      <i></i><icon-button flat icon="shield" size="9"></icon-button><span>有効:</span><span class="dot"></span>
      <icon-button flat icon="toggle" size="10"></icon-button><i></i><icon-button icon="tag" size="8"></icon-button><span>時間タグを追加</span>
    </div>
  </div>
  <div class="play">
    <icon-button icon="first" size="10"></icon-button><icon-button icon="prev" size="10"></icon-button><icon-button icon="play" size="11"></icon-button><icon-button icon="next" size="10"></icon-button><icon-button icon="last" size="10"></icon-button>
    <icon-button icon="keyMode" size="7"></icon-button>
    <div class="spin"><input aria-label="フレーム" value="0"><svg width="4" height="8"><path d="M2 0l2 3H0zM2 8l2-3H0z" fill="#ddd"/></svg></div>
    <icon-button icon="timeConfig" size="10"></icon-button>
  </div>
  <icon-button class="bigkey" flat icon="bigKey" size="19"></icon-button>
  <div class="keys">
    <button>オート キー</button><drop-down label="キー選択" value="選択"></drop-down>
    <button>セット キー</button><icon-button icon="tangent" size="11"></icon-button><button>キー フィルタ...</button>
  </div>
  <div class="nav">
    ${['zoom', 'zoomAll', 'extents', 'extentsAll', 'fov', 'hand', 'orbit', 'maximize'].map(n => `<icon-button ${n === 'hand' ? 'on' : ''} icon="${n}" size="11"></icon-button>`).join('')}
  </div>
  <svg class="resize" width="6" height="6"><path d="M5 0v6M3 2v4M1 4v2" stroke="#aaa"/></svg>
`)
</script>
</body>
</html>
